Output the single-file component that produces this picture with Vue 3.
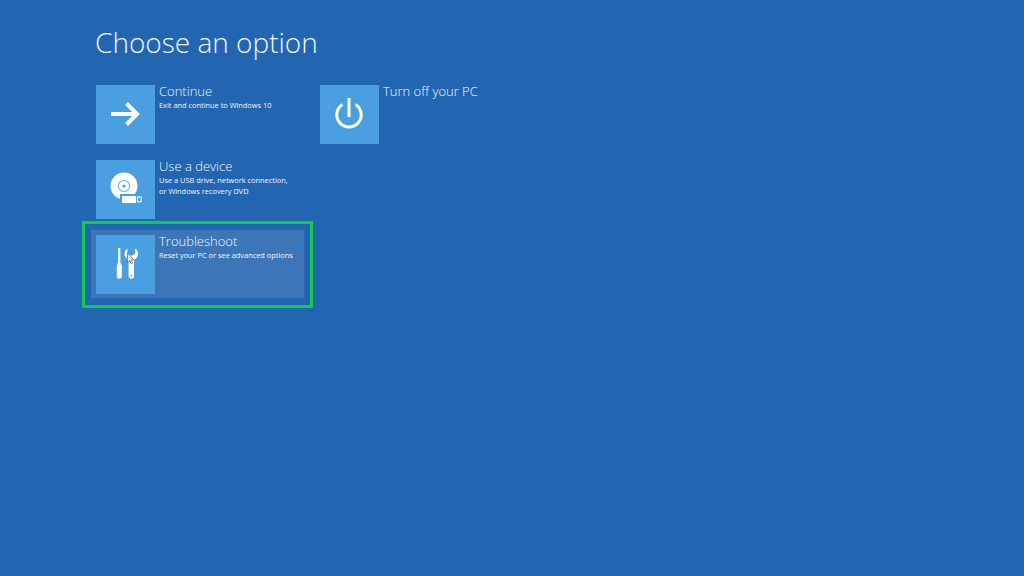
<script setup>
const columns = [
  [
    { id: 'continue', title: 'Continue', lines: ['Exit and continue to Windows 10'], icon: 'arrow' },
    { id: 'device', title: 'Use a device', lines: ['Use a USB drive, network connection,', 'or Windows recovery DVD'], icon: 'device' },
    { id: 'troubleshoot', title: 'Troubleshoot', lines: ['Reset your PC or see advanced options'], icon: 'tools', selected: true }
  ],
  [
    { id: 'off', title: 'Turn off your PC', lines: [], icon: 'power' }
  ]
]
</script>

<template>
  <main class="screen">
    <h1 class="heading">Choose an option</h1>
    <div class="columns">
      <div v-for="(col, i) in columns" :key="i" class="column">
        <div v-for="o in col" :key="o.id" class="option" :class="{ selected: o.selected }">
          <div class="tile">
            <svg v-if="o.icon === 'arrow'" width="60" height="60" viewBox="0 0 60 60">
              <path d="M15 29H41" fill="none" stroke="#fff" stroke-width="4"/>
              <path d="M30.5 18.5L41 29L30.5 39.5" fill="none" stroke="#fff" stroke-width="4"/>
            </svg>
            <svg v-else-if="o.icon === 'power'" width="60" height="60" viewBox="0 0 60 60">
              <path d="M22.5 19.5A12.2 12.2 0 1 0 35.5 19.5" fill="none" stroke="#fff" stroke-width="3"/>
              <path d="M29 13V32" fill="none" stroke="#fff" stroke-width="3"/>
            </svg>
            <svg v-else-if="o.icon === 'device'" width="60" height="60" viewBox="0 0 60 60">
              <circle cx="28" cy="26" r="13.5" fill="#fff"/>
              <circle cx="28" cy="26" r="5.6" fill="none" stroke="#7fbbe8" stroke-width="1.2"/>
              <circle cx="28" cy="26" r="1.6" fill="#4a9fe0"/>
              <rect x="24" y="34" width="18" height="11" fill="#4a9fe0"/>
              <rect x="26" y="36" width="14" height="7" rx="0.6" fill="#fff"/>
              <rect x="41.5" y="37" width="3.6" height="4.8" fill="none" stroke="#fff" stroke-width="1.1"/>
            </svg>
            <svg v-else width="60" height="60" viewBox="0 0 60 60">
              <rect x="22.2" y="13" width="2.2" height="15" fill="#fff"/>
              <path d="M21.8 28H24.8L25.8 31V42A1.4 1.4 0 0 1 24.4 43.4H22.2A1.4 1.4 0 0 1 20.8 42V31Z" fill="#fff"/>
              <path d="M31.4 13.5V18.5L35.3 21L39.2 18.5V13.5C41.2 14.8 42.2 17 42 19.4C41.8 22 40 23.8 38 24.8V41A2.7 2.7 0 0 1 32.6 41V24.8C30.6 23.8 28.8 22 28.6 19.4C28.4 17 29.4 14.8 31.4 13.5Z" fill="#fff"/>
              <circle cx="35.3" cy="40.6" r="0.9" fill="#4a9fe0"/>
              <path d="M31.5 18V27.5L33.7 25.6L35.1 28.8L36.5 28.2L35.1 25.1L37.8 24.9Z" fill="#e8e8e8" stroke="#5a5a5a" stroke-width="0.7"/>
            </svg>
          </div>
          <div class="text">
            <div class="title">{{ o.title }}</div>
            <div v-for="line in o.lines" :key="line" class="desc">{{ line }}</div>
          </div>
        </div>
      </div>
    </div>
  </main>
</template>

<style>
html, body { margin: 0; background: #2265b1; }
</style>

<style scoped>
.screen {
  width: 1024px;
  height: 576px;
  box-sizing: border-box;
  padding: 24px 0 0 95px;
  background: #2265b1;
  color: #fff;
  font-family: "Open Sans", "Noto Sans", sans-serif;
  overflow: hidden;
}
.heading {
  margin: 0 0 33px;
  font-size: 28px;
  line-height: 20px;
  height: 20px;
  padding-top: 8px;
  font-weight: 300;
  color: #f2f7fc;
}
.columns {
  display: flex;
  padding-left: 1px;
}
.column {
  width: 224px;
  display: flex;
  flex-direction: column;
  gap: 16px;
}
.option {
  position: relative;
  display: flex;
  gap: 4px;
  height: 59px;
}
.option.selected::before {
  content: "";
  position: absolute;
  left: -5px;
  top: -5px;
  width: 213px;
  height: 68px;
  background: #3d76b8;
}
.option.selected::after {
  content: "";
  position: absolute;
  left: -14px;
  top: -14px;
  width: 231px;
  height: 87px;
  box-sizing: border-box;
  border: 3px solid #14c850;
}
.tile {
  position: relative;
  z-index: 1;
  flex: none;
  width: 59px;
  height: 59px;
  background: #4a9fe0;
  overflow: hidden;
}
.tile svg { display: block; }
.text {
  position: relative;
  z-index: 1;
  white-space: nowrap;
}
.title {
  font-size: 13px;
  line-height: 14px;
  margin: -1px 0 2px;
  font-weight: 300;
  color: #f2f7fc;
}
.desc {
  font-size: 7.4px;
  line-height: 11px;
  color: #f2f7fc;
}
</style>
